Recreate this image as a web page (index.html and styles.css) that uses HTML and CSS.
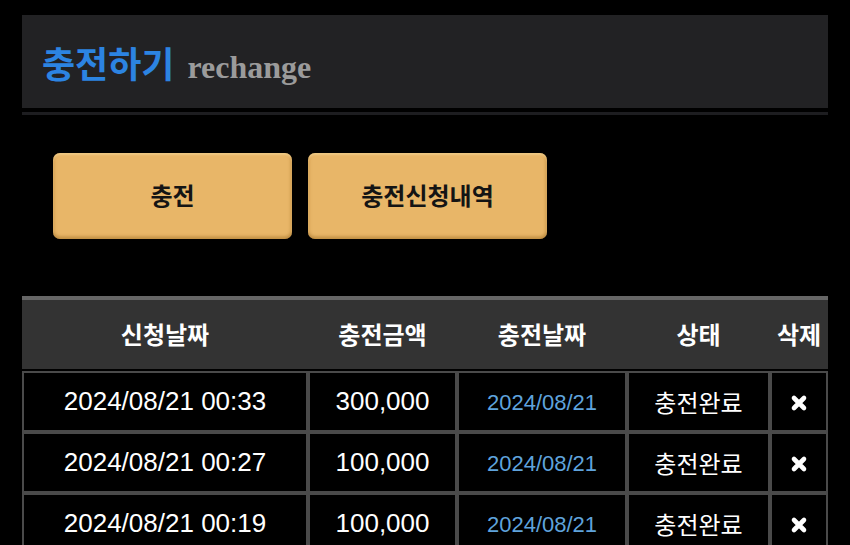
FILE: index.html
```html
<!DOCTYPE html>
<html lang="ko">
<head>
<meta charset="utf-8">
<title>충전하기</title>
<link rel="stylesheet" href="styles.css">
</head>
<body>
<div class="page">
  <div class="panel">
    <h1 class="title"><span class="title-ko">충전하기</span><span class="title-en">rechange</span></h1>
  </div>
  <div class="rule"></div>
  <div class="actions">
    <button class="btn">충전</button>
    <button class="btn">충전신청내역</button>
  </div>
  <table class="list">
    <colgroup>
      <col class="c1"><col class="c2"><col class="c3"><col class="c4"><col class="c5">
    </colgroup>
    <thead>
      <tr><th>신청날짜</th><th>충전금액</th><th>충전날짜</th><th>상태</th><th>삭제</th></tr>
    </thead>
    <tbody>
      <tr>
        <td class="num">2024/08/21 00:33</td><td class="num">300,000</td><td class="date">2024/08/21</td><td class="state">충전완료</td>
        <td class="del"><svg width="18" height="18" viewBox="0 0 18 18"><path d="M4 4 L14 14 M14 4 L4 14" stroke="#fff" stroke-width="4.6" stroke-linecap="round"/></svg></td>
      </tr>
      <tr>
        <td class="num">2024/08/21 00:27</td><td class="num">100,000</td><td class="date">2024/08/21</td><td class="state">충전완료</td>
        <td class="del"><svg width="18" height="18" viewBox="0 0 18 18"><path d="M4 4 L14 14 M14 4 L4 14" stroke="#fff" stroke-width="4.6" stroke-linecap="round"/></svg></td>
      </tr>
      <tr>
        <td class="num">2024/08/21 00:19</td><td class="num">100,000</td><td class="date">2024/08/21</td><td class="state">충전완료</td>
        <td class="del"><svg width="18" height="18" viewBox="0 0 18 18"><path d="M4 4 L14 14 M14 4 L4 14" stroke="#fff" stroke-width="4.6" stroke-linecap="round"/></svg></td>
      </tr>
    </tbody>
  </table>
</div>
</body>
</html>
```

FILE: styles.css
```css
html, body {
  margin: 0;
  padding: 0;
  background: #000;
  height: 100%;
  overflow: hidden;
}
body {
  font-family: "Liberation Sans", "Noto Sans CJK KR", sans-serif;
  color: #fff;
}
.page {
  padding: 15px 22px 0 22px;
}
.panel {
  background: #222224;
  height: 93px;
  display: flex;
  align-items: center;
  padding-left: 20px;
}
.title {
  margin: 0;
  display: flex;
  align-items: baseline;
  font-weight: bold;
}
.title-ko {
  font-family: "Noto Sans CJK KR", sans-serif;
  font-size: 36px;
  color: #2c84e2;
}
.title-en {
  font-family: "Liberation Serif", serif;
  font-size: 32px;
  color: #9b9b9b;
  margin-left: 13px;
}
.rule {
  margin-top: 4px;
  height: 3px;
  background: #1d1d20;
}
.actions {
  display: flex;
  gap: 16px;
  margin-top: 38px;
  padding-left: 31px;
}
.btn {
  width: 239px;
  height: 86px;
  border: none;
  border-radius: 7px;
  background: #e8b668;
  box-shadow: inset 0 2px 2px rgba(255, 230, 170, 0.5), inset 0 -3px 3px rgba(150, 100, 30, 0.35), inset 2px 0 3px rgba(150, 100, 30, 0.12), inset -2px 0 3px rgba(150, 100, 30, 0.2);
  font-family: "Noto Sans CJK KR", sans-serif;
  font-weight: bold;
  font-size: 24px;
  color: #141414;
  padding: 0 0 3px 0;
}
.list {
  margin-top: 57px;
  width: 806px;
  table-layout: fixed;
  border-collapse: separate;
  border-spacing: 0;
}
.c1 { width: 286px; }
.c2 { width: 149px; }
.c3 { width: 170px; }
.c4 { width: 143px; }
.c5 { width: 58px; }
.list th {
  background: #333333;
  border-top: 4px solid #666666;
  border-bottom: 2px solid #000;
  height: 66px;
  padding: 0 0 3px 0;
  font-family: "Noto Sans CJK KR", sans-serif;
  font-weight: bold;
  font-size: 24px;
  color: #fff;
  text-align: center;
  white-space: nowrap;
}
.list td {
  border: 2px solid #4a4a4a;
  height: 57px;
  padding: 0;
  text-align: center;
  background: #000;
  white-space: nowrap;
}
.list td.date,
.list td.del {
  padding-top: 3px;
  height: 54px;
}
.num {
  font-family: "Liberation Sans", sans-serif;
  font-size: 26px;
  color: #fff;
}
.date {
  font-family: "Liberation Sans", sans-serif;
  font-size: 22px;
  color: #5fa3dc;
}
.state {
  font-family: "Noto Sans CJK KR", sans-serif;
  font-size: 24px;
  color: #fff;
}
.del svg {
  display: inline-block;
  vertical-align: middle;
}
```
